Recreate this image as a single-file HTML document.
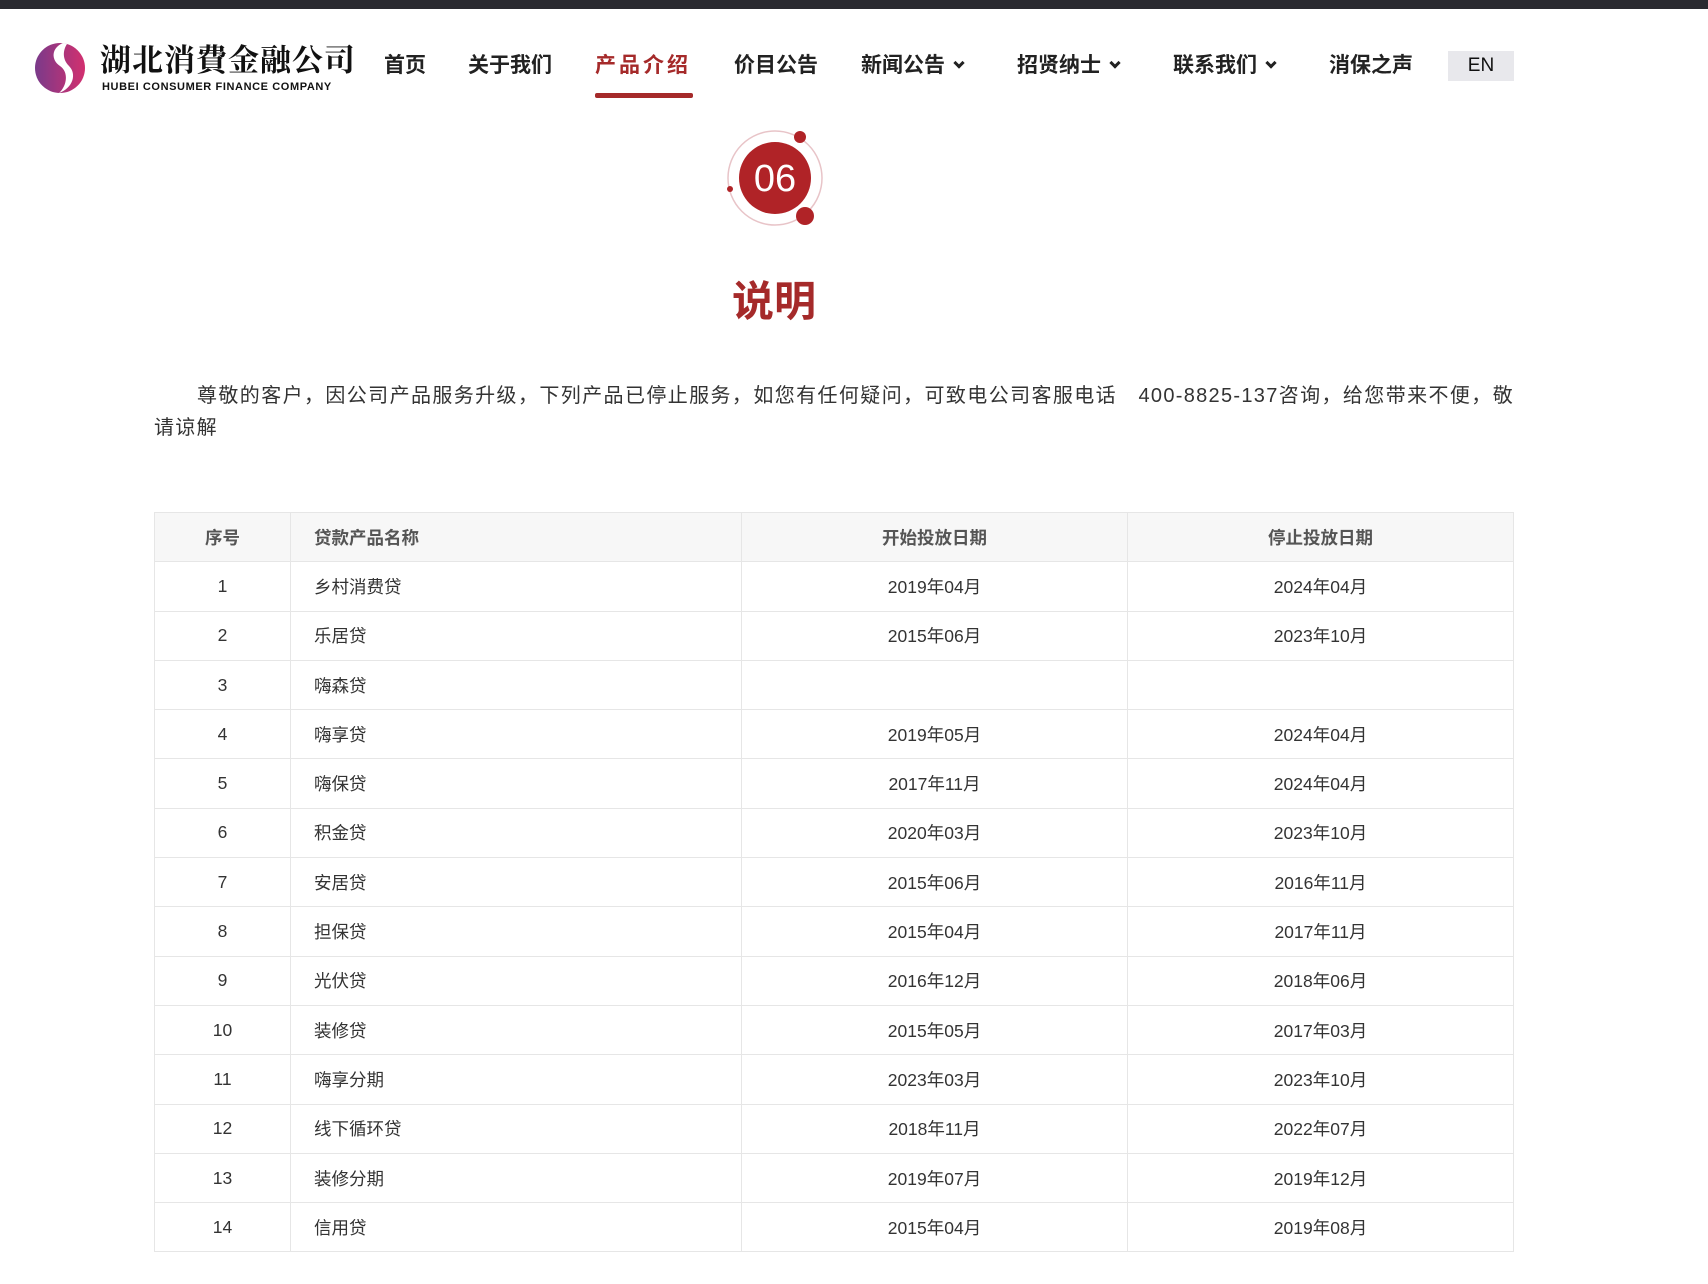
<!DOCTYPE html>
<html><head><meta charset="utf-8"><style>
*{margin:0;padding:0;box-sizing:border-box}
body{width:1708px;height:1284px;background:#fff;font-family:"Liberation Sans","Noto Sans CJK SC",sans-serif;color:#333;position:relative;overflow:hidden}
.top{position:absolute;left:0;top:0;width:1708px;height:9px;background:#2a2a30}
.nav{position:absolute;top:51px;font-size:21px;font-weight:bold;color:#222;line-height:30px;white-space:nowrap}
.nav.act{color:#a52a2a;letter-spacing:3px}
.chev{display:inline-block;width:8px;height:8px;border-right:3px solid #222;border-bottom:3px solid #222;transform:rotate(45deg);margin-left:10px;position:relative;top:-5px}
.ul{position:absolute;left:595px;top:93px;width:98px;height:5px;background:#a52a2a;border-radius:2px}
.en{position:absolute;left:1448px;top:51px;width:66px;height:30px;background:#e8e8ec;font-size:19px;text-align:center;line-height:30px;color:#111}
.title{position:absolute;left:0;width:1548px;top:268px;text-align:center;font-size:42px;font-weight:bold;color:#a52a2a}
.p{position:absolute;left:154px;top:380px;width:1360px;font-size:20px;letter-spacing:1.3px;line-height:32px;color:#333;text-indent:43px;text-align:justify}
table{position:absolute;left:154px;top:512px;width:1360px;border-collapse:collapse;font-size:17.5px}
td,th{border:1px solid #e6e6e6;height:49.3px;text-align:center;color:#333;font-weight:normal}
th{background:#f7f7f7;color:#555;font-weight:bold}
td.l,th.l{text-align:left;padding-left:23px}
</style></head><body>
<div class="top"></div>
<svg style="position:absolute;left:33px;top:40px" width="54" height="56" viewBox="0 0 54 56">
<defs><linearGradient id="g" x1="0" x2="1"><stop offset="0" stop-color="#7a3a8a"/><stop offset="1" stop-color="#d2306f"/></linearGradient></defs>
<circle cx="27" cy="28" r="25" fill="url(#g)"/>
<path d="M30 3 C18 8 18 20 27 26 C36 32 34 46 26 53 C40 48 44 34 36 26 C29 19 30 10 34 4Z" fill="#fff"/>
</svg>
<div style="position:absolute;left:100px;top:40px;font-size:31px;font-weight:bold;letter-spacing:1px;color:#111;font-family:'Noto Serif CJK SC',serif;line-height:36px">湖北消費金融公司</div>
<div style="position:absolute;left:102px;top:81px;font-size:11px;font-weight:bold;letter-spacing:0.6px;color:#111;white-space:nowrap">HUBEI CONSUMER FINANCE COMPANY</div>
<div class="nav" style="left:384px">首页</div>
<div class="nav" style="left:468px">关于我们</div>
<div class="nav act" style="left:595px">产品介绍</div>
<div class="nav" style="left:734px">价目公告</div>
<div class="nav" style="left:861px">新闻公告<span class="chev"></span></div>
<div class="nav" style="left:1017px">招贤纳士<span class="chev"></span></div>
<div class="nav" style="left:1173px">联系我们<span class="chev"></span></div>
<div class="nav" style="left:1329px">消保之声</div>
<div class="ul"></div>
<div class="en">EN</div>
<svg style="position:absolute;left:720px;top:124px" width="110" height="110" viewBox="0 0 110 110">
<circle cx="55" cy="54" r="47" fill="none" stroke="#e8c4c8" stroke-width="1.5"/>
<circle cx="55" cy="54" r="36" fill="#b02327"/>
<circle cx="80" cy="13" r="6" fill="#b02327"/>
<circle cx="85" cy="92" r="9" fill="#b02327"/>
<circle cx="10" cy="65" r="3" fill="#b02327"/>
<text x="55" y="67" text-anchor="middle" font-family="Liberation Sans,sans-serif" font-size="38" fill="#fff">06</text>
</svg>
<div class="title">说明</div>
<div class="p">尊敬的客户，因公司产品服务升级，下列产品已停止服务，如您有任何疑问，可致电公司客服电话　400-8825-137咨询，给您带来不便，敬请谅解</div>
<table>
<colgroup><col style="width:136px"><col style="width:451px"><col style="width:386px"><col></colgroup>
<tr><th>序号</th><th class="l">贷款产品名称</th><th>开始投放日期</th><th>停止投放日期</th></tr>
<tr><td>1</td><td class="l">乡村消费贷</td><td>2019年04月</td><td>2024年04月</td></tr>
<tr><td>2</td><td class="l">乐居贷</td><td>2015年06月</td><td>2023年10月</td></tr>
<tr><td>3</td><td class="l">嗨森贷</td><td></td><td></td></tr>
<tr><td>4</td><td class="l">嗨享贷</td><td>2019年05月</td><td>2024年04月</td></tr>
<tr><td>5</td><td class="l">嗨保贷</td><td>2017年11月</td><td>2024年04月</td></tr>
<tr><td>6</td><td class="l">积金贷</td><td>2020年03月</td><td>2023年10月</td></tr>
<tr><td>7</td><td class="l">安居贷</td><td>2015年06月</td><td>2016年11月</td></tr>
<tr><td>8</td><td class="l">担保贷</td><td>2015年04月</td><td>2017年11月</td></tr>
<tr><td>9</td><td class="l">光伏贷</td><td>2016年12月</td><td>2018年06月</td></tr>
<tr><td>10</td><td class="l">装修贷</td><td>2015年05月</td><td>2017年03月</td></tr>
<tr><td>11</td><td class="l">嗨享分期</td><td>2023年03月</td><td>2023年10月</td></tr>
<tr><td>12</td><td class="l">线下循环贷</td><td>2018年11月</td><td>2022年07月</td></tr>
<tr><td>13</td><td class="l">装修分期</td><td>2019年07月</td><td>2019年12月</td></tr>
<tr><td>14</td><td class="l">信用贷</td><td>2015年04月</td><td>2019年08月</td></tr>
</table>
</body></html>
